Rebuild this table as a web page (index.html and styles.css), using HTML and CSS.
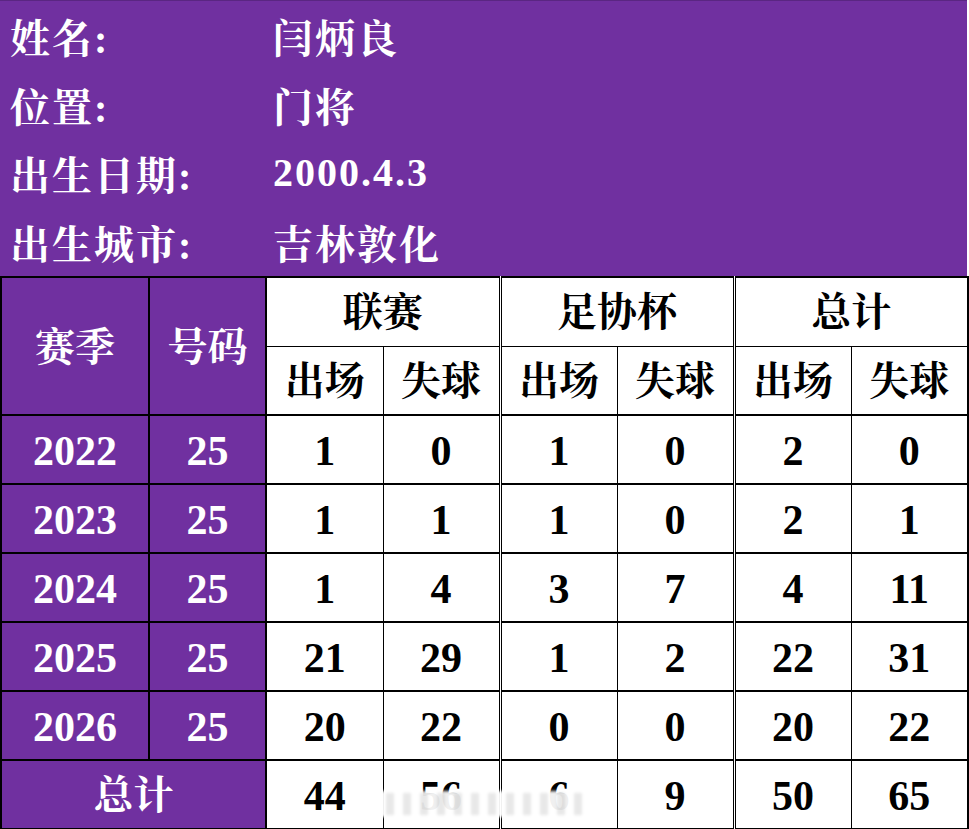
FILE: index.html
```html
<!DOCTYPE html>
<html lang="zh">
<head>
<meta charset="utf-8">
<title>闫炳良</title>
<link rel="stylesheet" href="styles.css">
</head>
<body>
<div class="page">
  <div class="info">
    <div class="info-row"><span class="label">姓名:</span><span class="value">闫炳良</span></div>
    <div class="info-row"><span class="label">位置:</span><span class="value">门将</span></div>
    <div class="info-row"><span class="label">出生日期:</span><span class="value">2000.4.3</span></div>
    <div class="info-row"><span class="label">出生城市:</span><span class="value">吉林敦化</span></div>
  </div>
  <table class="stats">
    <colgroup>
      <col class="c-season"><col class="c-num">
      <col class="c-val"><col class="c-val"><col class="c-val"><col class="c-val"><col class="c-val"><col class="c-val">
    </colgroup>
    <tr class="head1">
      <td class="p" rowspan="2">赛季</td>
      <td class="p" rowspan="2">号码</td>
      <td colspan="2" class="w">联赛</td>
      <td colspan="2" class="w g">足协杯</td>
      <td colspan="2" class="w g">总计</td>
    </tr>
    <tr class="head2">
      <td class="w">出场</td><td class="w">失球</td>
      <td class="w g">出场</td><td class="w">失球</td>
      <td class="w g">出场</td><td class="w">失球</td>
    </tr>
    <tr class="data">
      <td class="p n">2022</td><td class="p n">25</td>
      <td class="w n">1</td><td class="w n">0</td><td class="w n g">1</td><td class="w n">0</td><td class="w n g">2</td><td class="w n">0</td>
    </tr>
    <tr class="data">
      <td class="p n">2023</td><td class="p n">25</td>
      <td class="w n">1</td><td class="w n">1</td><td class="w n g">1</td><td class="w n">0</td><td class="w n g">2</td><td class="w n">1</td>
    </tr>
    <tr class="data">
      <td class="p n">2024</td><td class="p n">25</td>
      <td class="w n">1</td><td class="w n">4</td><td class="w n g">3</td><td class="w n">7</td><td class="w n g">4</td><td class="w n">11</td>
    </tr>
    <tr class="data">
      <td class="p n">2025</td><td class="p n">25</td>
      <td class="w n">21</td><td class="w n">29</td><td class="w n g">1</td><td class="w n">2</td><td class="w n g">22</td><td class="w n">31</td>
    </tr>
    <tr class="data">
      <td class="p n">2026</td><td class="p n">25</td>
      <td class="w n">20</td><td class="w n">22</td><td class="w n g">0</td><td class="w n">0</td><td class="w n g">20</td><td class="w n">22</td>
    </tr>
    <tr class="data">
      <td class="p" colspan="2">总计</td>
      <td class="w n">44</td><td class="w n">56</td><td class="w n g">6</td><td class="w n">9</td><td class="w n g">50</td><td class="w n">65</td>
    </tr>
  </table>
  <div class="watermark"><span></span><span></span><span></span><span></span><span></span><span></span><span></span><span></span><span></span><span></span><span></span><span></span></div>
</div>
</body>
</html>
```
FILE: styles.css
```css
html, body {
  margin: 0;
  padding: 0;
  background: #ffffff;
}
body {
  font-family: "Liberation Serif", "Noto Serif CJK SC", "Noto Sans CJK SC", serif;
  font-weight: 700;
}
.page {
  position: relative;
  width: 969px;
  height: 829px;
  overflow: hidden;
}
.info {
  width: 967px;
  height: 276px;
  background: #7030a0;
  border-top: 1px solid #5a2682;
  box-sizing: border-box;
  display: flex;
  flex-direction: column;
  padding-top: 0;
}
.info-row {
  height: 68.75px;
  display: flex;
  align-items: center;
  color: #ffffff;
  font-size: 40px;
  letter-spacing: 2px;
  padding-left: 10px;
}
.label {
  width: 263px;
  flex: none;
}
.value {
  flex: none;
}
.stats {
  width: 967px;
  border-collapse: collapse;
  table-layout: fixed;
}
.c-season { width: 148px; }
.c-num { width: 117px; }
.c-val { width: 117px; }
.stats tr { height: 69px; }
.stats td {
  padding: 3px 0 0 0;
  text-align: center;
  vertical-align: middle;
  font-size: 40px;
  line-height: 1;
  border: 1px solid #000000;
}
.stats td.p {
  background: #7030a0;
  color: #ffffff;
  border: 2px solid #000000;
}
.stats td.w {
  background: #ffffff;
  color: #000000;
}
.stats td.n {
  font-size: 42px;
}
.stats td.g {
  border-left: 3px double #000000;
}
.stats tr.head1 td.w {
  border-top: 2px solid #000000;
}
.stats tr.data td {
  border-top: 2px solid #000000;
  border-bottom: 2px solid #000000;
}
.stats tr td:last-child {
  border-right: 2px solid #000000;
}
.stats td.p + td.w {
  border-left: 2px solid #000000;
}
.watermark {
  position: absolute;
  left: 374px;
  top: 791px;
  width: 220px;
  height: 26px;
  background: rgba(255, 255, 255, 0.94);
  filter: blur(1.5px);
  display: flex;
  align-items: stretch;
  justify-content: space-between;
  padding: 2px 12px;
  box-sizing: border-box;
}
.watermark span {
  width: 8px;
  background: rgba(150, 150, 150, 0.22);
}
```
